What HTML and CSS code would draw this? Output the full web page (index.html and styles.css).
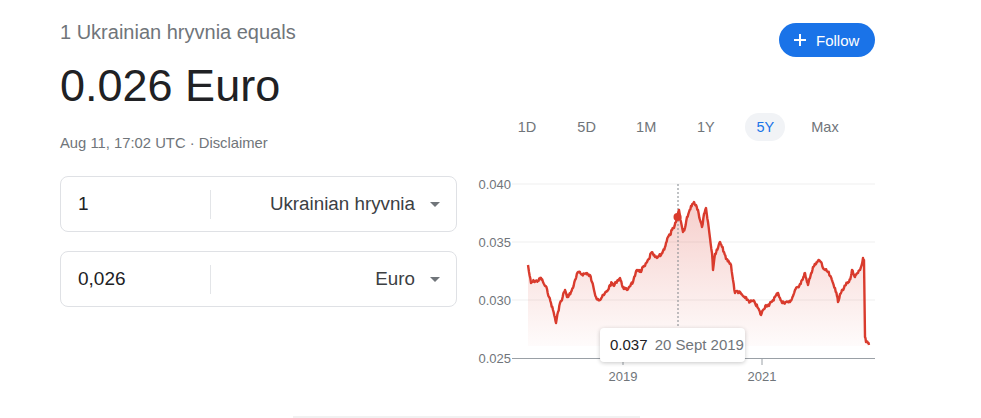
FILE: index.html
```html
<!DOCTYPE html>
<html lang="en">
<head>
    <meta charset="UTF-8">
    <meta name="viewport" content="width=device-width, initial-scale=1.0">
    <title>UAH to EUR</title>
    <link rel="stylesheet" href="styles.css">
</head>
<body>
    <div class="page">
        <div class="left-col">
            <div class="equals">1 Ukrainian hryvnia equals</div>
            <div class="value">0.026 Euro</div>
            <div class="date">Aug 11, 17:02 UTC · Disclaimer</div>

            <div class="conv-box">
                <div class="amount">1</div>
                <div class="divider"></div>
                <div class="currency">Ukrainian hryvnia <span class="caret"></span></div>
            </div>
            <div class="conv-box">
                <div class="amount">0,026</div>
                <div class="divider"></div>
                <div class="currency">Euro <span class="caret"></span></div>
            </div>
        </div>

        <div class="right-col">
            <div class="follow-row">
                <button class="follow-button">
                    <svg width="12" height="12" viewBox="0 0 12 12"><path d="M6 0v12M0 6h12" stroke="#fff" stroke-width="2"/></svg>
                    Follow
                </button>
            </div>

            <div class="tabs">
                <span class="tab">1D</span>
                <span class="tab">5D</span>
                <span class="tab">1M</span>
                <span class="tab">1Y</span>
                <span class="tab active">5Y</span>
                <span class="tab">Max</span>
            </div>

            <div class="chart">
                <svg width="405" height="220" viewBox="470 170 405 220">
                    <defs>
                        <linearGradient id="fill" x1="0" y1="200" x2="0" y2="346" gradientUnits="userSpaceOnUse">
                            <stop offset="0" stop-color="#db4437" stop-opacity="0.26"/>
                            <stop offset="1" stop-color="#db4437" stop-opacity="0.02"/>
                        </linearGradient>
                    </defs>
                    <!-- grid -->
                    <line x1="512" y1="184" x2="875" y2="184" class="grid"/>
                    <line x1="512" y1="242" x2="875" y2="242" class="grid"/>
                    <line x1="512" y1="300" x2="875" y2="300" class="grid"/>

                    <text x="511" y="188.5" class="axis-label" text-anchor="end">0.040</text>
                    <text x="511" y="246.5" class="axis-label" text-anchor="end">0.035</text>
                    <text x="511" y="304.5" class="axis-label" text-anchor="end">0.030</text>
                    <text x="511" y="362.5" class="axis-label" text-anchor="end">0.025</text>

                    <polygon id="area" fill="url(#fill)" points=""/>
                    <line x1="678" y1="184" x2="678" y2="330" class="cursor"/>
                    <polyline id="line" class="price-line" points=""/>
                    <circle cx="677.5" cy="217" r="4" fill="#d93b2d"/>

                    <line x1="512" y1="358.5" x2="875" y2="358.5" class="baseline"/>
                    <line x1="623" y1="358" x2="623" y2="365" class="baseline"/>
                    <line x1="762" y1="358" x2="762" y2="365" class="baseline"/>
                    <text x="623" y="381" class="axis-label" text-anchor="middle">2019</text>
                    <text x="762" y="381" class="axis-label" text-anchor="middle">2021</text>
                </svg>
                <div class="tooltip"><span class="tip-value">0.037</span> 20 Sept 2019</div>
            </div>
        </div>
    </div>
    <div class="bottom-edge"></div>

    <script>
        // 5 年走勢的點 (x, y)
        const points = [
            [528,265],[529,272],[531,283],[534,281],[538,281],[541,278],[543,282],[545,286],[547,289],[549,297],
            [551,303],[553,310],[555,318],[556,323],[558,312],[560,303],[562,300],[564,292],[565,290],[567,297],
            [569,295],[571,292],[573,288],[575,280],[578,272],[581,274],[584,274],[587,273],[589,276],[590,275],
            [592,282],[594,290],[596,297],[598,299],[600,300],[602,297],[604,295],[606,292],[608,290],[610,285],
            [612,283],[614,286],[616,282],[618,280],[620,278],[622,285],[623,287],[625,289],[627,290],[629,287],
            [631,284],[633,282],[635,276],[637,270],[639,270],[641,272],[643,267],[645,266],[647,262],[649,259],
            [651,253],[653,254],[655,257],[657,258],[659,256],[661,255],[663,251],[665,247],[666,243],[668,237],
            [670,235],[672,230],[674,228],[676,222],[677,217],[679,210],[681,222],[683,232],[685,228],[687,217],
            [689,212],[691,206],[694,202],[696,205],[698,210],[700,220],[702,227],[704,214],[706,208],[708,222],
            [710,238],[712,253],[713,270],[715,254],[718,248],[720,242],[722,247],[724,252],[726,259],[729,262],
            [731,265],[733,280],[735,293],[737,291],[740,293],[743,296],[745,298],[748,300],[750,302],[753,301],
            [755,303],[758,308],[761,315],[763,310],[766,305],[769,306],[771,302],[773,300],[775,297],[778,293],
            [780,298],[782,303],[786,302],[790,302],[793,296],[795,290],[798,287],[800,284],[802,280],[804,276],
            [805,273],[807,282],[808,285],[810,278],[813,267],[816,264],[819,260],[821,262],[823,268],[825,270],
            [828,272],[830,276],[833,283],[835,288],[837,296],[838,302],[840,294],[842,290],[844,288],[847,283],
            [849,282],[851,276],[852,270],[854,275],[855,277],[858,273],[860,270],[862,264],[863,258],[864,260],
            [865,337],[866,342],[868,343],[869,345]
        ];

        // 加一點固定的小雜訊，讓線看起來像每日資料
        let seed = 7;
        function rand() {
            seed = (seed * 9301 + 49297) % 233280;
            return seed / 233280;
        }
        const dense = [];
        for (let i = 0; i < points.length - 1; i++) {
            const [x1, y1] = points[i];
            const [x2, y2] = points[i + 1];
            dense.push([x1, y1]);
            const steps = Math.max(1, Math.round((x2 - x1) * 1.5));
            if (Math.abs(y2 - y1) > 20) continue; // 大跌的地方不要加雜訊
            for (let s = 1; s < steps; s++) {
                const t = s / steps;
                dense.push([x1 + (x2 - x1) * t, y1 + (y2 - y1) * t + (rand() - 0.5) * 3]);
            }
        }
        dense.push(points[points.length - 1]);

        const linePts = dense.map(p => p[0].toFixed(1) + "," + p[1].toFixed(1)).join(" ");
        document.getElementById("line").setAttribute("points", linePts);
        document.getElementById("area").setAttribute("points", linePts + " 869,346 528,346");
    </script>
</body>
</html>
```

FILE: styles.css
```css
body {
    margin: 0;
    font-family: "Liberation Sans", Arial, sans-serif;
    background: #fff;
    color: #202124;
    overflow: hidden;
}
.page {
    display: flex;
    gap: 13px;
    padding-left: 60px;
}
.left-col {
    width: 397px;
    padding-top: 20px;
}
.equals {
    font-size: 20px;
    line-height: 24px;
    color: #70757a;
}
.value {
    margin-top: 16px;
    font-size: 45px;
    line-height: 52px;
    color: #202124;
}
.date {
    margin-top: 21px;
    font-size: 14.8px;
    line-height: 20px;
    color: #70757a;
}
.conv-box {
    display: flex;
    align-items: center;
    height: 54px;
    margin-top: 19px;
    border: 1px solid #dfe1e5;
    border-radius: 8px;
}
.date + .conv-box {
    margin-top: 23px;
}
.amount {
    width: 132px;
    padding-left: 17px;
    font-size: 19px;
    color: #202124;
}
.divider {
    width: 1px;
    height: 29px;
    background: #e3e5e8;
}
.currency {
    flex: 1;
    display: flex;
    align-items: center;
    justify-content: flex-end;
    gap: 15px;
    padding-right: 16px;
    font-size: 18.8px;
    color: #3c4043;
}
.caret {
    width: 0;
    height: 0;
    border-left: 5px solid transparent;
    border-right: 5px solid transparent;
    border-top: 5px solid #70757a;
}
.right-col {
    width: 405px;
}
.follow-row {
    display: flex;
    justify-content: flex-end;
    padding-top: 23px;
}
.follow-button {
    display: flex;
    align-items: center;
    gap: 10px;
    height: 34px;
    width: 96px;
    padding: 0 0 0 15px;
    border: none;
    border-radius: 17px;
    background: #1a73e8;
    color: #fff;
    font-family: inherit;
    font-size: 15px;
}
.tabs {
    display: flex;
    gap: 19.6px;
    margin-top: 56px;
    padding-left: 37px;
}
.tab {
    width: 40px;
    height: 28px;
    line-height: 28px;
    text-align: center;
    font-size: 14.5px;
    color: #70757a;
    border-radius: 14px;
}
.tab.active {
    color: #1a73e8;
    background: #f1f3f6;
}
.chart {
    position: relative;
    margin-top: 29px;
    height: 220px;
}
.chart svg {
    display: block;
}
.grid {
    stroke: #efefef;
    stroke-width: 1;
}
.baseline {
    stroke: #9aa0a6;
    stroke-width: 1;
}
.cursor {
    stroke: #80868b;
    stroke-width: 1;
    stroke-dasharray: 2 2;
}
.price-line {
    fill: none;
    stroke: #d93b2d;
    stroke-width: 2.4;
    stroke-linejoin: round;
}
.axis-label {
    font-family: "Liberation Sans", Arial, sans-serif;
    font-size: 13px;
    fill: #70757a;
}
.tooltip {
    position: absolute;
    left: 130px;
    top: 158px;
    width: 135px;
    height: 34px;
    padding-left: 10px;
    line-height: 34px;
    background: #fff;
    border-radius: 4px;
    box-shadow: 0 1px 4px rgba(0, 0, 0, 0.22);
    font-size: 15px;
    color: #70757a;
    white-space: nowrap;
}
.tip-value {
    color: #202124;
    margin-right: 3px;
}
.bottom-edge {
    margin-top: 26px;
    margin-left: 293px;
    width: 347px;
    height: 2px;
    background: #f1f1f1;
}
```
